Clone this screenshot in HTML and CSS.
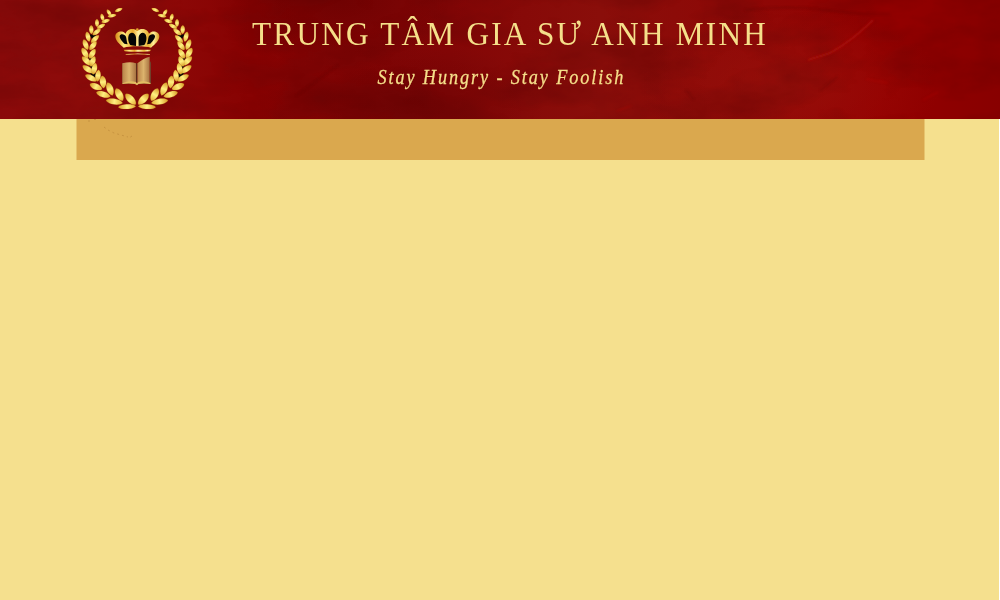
FILE: index.html
```html
<!DOCTYPE html>
<html lang="vi">
<head>
<meta charset="utf-8">
<title>Trung Tâm Gia Sư Anh Minh</title>
<link rel="stylesheet" href="styles.css">
</head>
<body>
<header class="banner">
  <svg class="texture" viewBox="0 0 1000 119" aria-hidden="true">
    <defs>
      <filter id="clouds" x="0" y="0" width="100%" height="100%" color-interpolation-filters="sRGB">
        <feTurbulence type="fractalNoise" baseFrequency="0.012 0.024" numOctaves="5" seed="8"/>
        <feColorMatrix values="0 0 0 0 0.34  0 0 0 0 0.01  0 0 0 0 0.01  1.3 0 0 0 -0.48"/>
      </filter>
      <filter id="soft"><feGaussianBlur stdDeviation="1"/></filter>
    </defs>
    <rect width="1000" height="119" filter="url(#clouds)" opacity=".6"/>
    <g fill="none" stroke="#bd1510" filter="url(#soft)">
      <path d="M873 20q-21 21-43 33l-22 7" stroke-width="2" opacity=".55"/>
      <path d="M617 111l14-5M866 79l22 4M923 100l15-8" opacity=".5"/>
      <path d="M745 10q45-5 80 0t65 4M820 91l18-15M686 90l8 10M338 65l-42 31" stroke="#520000" opacity=".45"/>
    </g>
  </svg>
  <div class="inner">
    <svg class="logo" viewBox="0 0 405 357" role="img" aria-label="Anh Minh">
      <defs>
        <linearGradient id="gold"><stop offset="0" stop-color="#d69a25"/><stop offset=".5" stop-color="#fff080"/><stop offset="1" stop-color="#e3b035"/></linearGradient>
        <linearGradient id="crownGold"><stop offset="0" stop-color="#d58b17"/><stop offset=".2" stop-color="#ffec80"/><stop offset=".4" stop-color="#e9a92c"/><stop offset=".52" stop-color="#fff1a0"/><stop offset=".75" stop-color="#e8b435"/><stop offset=".87" stop-color="#fff09a"/><stop offset="1" stop-color="#d69a21"/></linearGradient>
        <linearGradient id="page"><stop offset="0" stop-color="#b98348"/><stop offset=".5" stop-color="#dcb36d"/><stop offset="1" stop-color="#a87342"/></linearGradient>
        <path id="leaf" d="M-11 0C-8-9 7-9 11 0C7 9-8 9-11 0Z" fill="url(#gold)" stroke="#c58a22" stroke-width=".3"/>
        <g id="branch">
          <path d="M56 103l22 2-8 16zM54 172l24 1-8 22zM56 194l22 5-4 19zM58 217l21 4-5 18z" fill="#080603"/>
          <use href="#leaf" transform="translate(146 30) rotate(-22) scale(1.1 .65)"/>
          <use href="#leaf" transform="translate(117 38) rotate(58) scale(1 .75)"/>
          <use href="#leaf" transform="translate(126 47) rotate(-10) scale(1.2 .7)"/>
          <use href="#leaf" transform="translate(97 52) rotate(75) scale(1 .8)"/>
          <use href="#leaf" transform="translate(107 63) rotate(-18) scale(1.2 .75)"/>
          <use href="#leaf" transform="translate(81 69) rotate(88) scale(1.1 .85)"/>
          <use href="#leaf" transform="translate(93 79) rotate(-28) scale(1.25 .8)"/>
          <use href="#leaf" transform="translate(64 89) rotate(87) scale(1.2 .95)"/>
          <use href="#leaf" transform="translate(80 96) rotate(-37) scale(1.35 .9)"/>
          <use href="#leaf" transform="translate(54 110) rotate(76) scale(1.4 1)"/>
          <use href="#leaf" transform="translate(75 117) rotate(-43) scale(1.45 1)"/>
          <use href="#leaf" transform="translate(47 134) rotate(68) scale(1.5 1.1)"/>
          <use href="#leaf" transform="translate(69 137) rotate(-52) scale(1.5 1.1)"/>
          <use href="#leaf" transform="translate(45 159) rotate(60) scale(1.6 1.2)"/>
          <use href="#leaf" transform="translate(67 161) rotate(-59) scale(1.5 1.15)"/>
          <use href="#leaf" transform="translate(50 183) rotate(43) scale(1.7 1.2)"/>
          <use href="#leaf" transform="translate(68 184) rotate(-68) scale(1.5 1.2)"/>
          <use href="#leaf" transform="translate(54 208) rotate(34) scale(1.75 1.2)"/>
          <use href="#leaf" transform="translate(73 206) rotate(-77) scale(1.6 1.2)"/>
          <use href="#leaf" transform="translate(63 234) rotate(27) scale(1.75 1.2)"/>
          <use href="#leaf" transform="translate(84 227) rotate(-83) scale(1.6 1.2)"/>
          <use href="#leaf" transform="translate(78 260) rotate(22) scale(1.8 1.3)"/>
          <use href="#leaf" transform="translate(99 246) rotate(83) scale(1.7 1.4)"/>
          <use href="#leaf" transform="translate(100 283) rotate(17) scale(2 1.3)"/>
          <use href="#leaf" transform="translate(120 267) rotate(69) scale(1.9 1.45)"/>
          <use href="#leaf" transform="translate(133 305) rotate(9) scale(2.3 1.25)"/>
          <use href="#leaf" transform="translate(148 284) rotate(60) scale(1.9 1.5)"/>
          <use href="#leaf" transform="translate(171 320) rotate(-3) scale(2.4 1.05)"/>
          <use href="#leaf" transform="translate(182 298) rotate(46) scale(2 1.5)"/>
        </g>
      </defs>
      <use href="#branch"/>
      <use href="#branch" transform="translate(402 0) scale(-1 1)"/>
      <path d="M161 143C148 133 136 121 136 109c0-13 20-20 31-8 3-14 24-19 35-8 11-11 32-6 35 8 11-12 31-5 31 8 0 12-12 24-25 34-18-6-62-6-82 0Z" fill="url(#crownGold)"/>
      <path d="M163 131c-7-7-15-17-14-23 2-9 16-6 19 2 2 7 2 16 5 23zM181 135c-7-10-9-26-2-34 8-7 17 0 19 10 1 10 0 20 0 27zM223 135c7-10 9-26 2-34-8-7-17 0-19 10-1 10 0 20 0 27zM241 131c7-7 15-17 14-23-2-9-16-6-19 2-2 7-2 16-5 23z" fill="#050505"/>
      <circle cx="202" cy="89" r="4" fill="#e4a52c"/>
      <path d="M161 149h82l-3 5q-38 3-76 0zM167 162q35-3 73 0v2q-37-2-73 0z" fill="url(#crownGold)"/>
      <path d="M157 190l4-2v61h38l4 4 4-4h33v-66l3 5v63h-35l-5 4-6-4h-40z" fill="#70402a"/>
      <path d="M157 190q25-7 41 0v60q-20-5-41 0z" fill="url(#page)"/>
      <path d="M202 190q17-15 37-20v80q-20-6-37 0z" fill="url(#page)"/>
      <path d="M157 250q21-10 41-4l3 4 4-4q17-6 37 3l-1 3q-20-3-36 0l-4 4-6-4q-19-3-38 0z" fill="#e3bd62"/>
      <path d="M200 190v57" stroke="#56351c" stroke-width="3"/>
    </svg>
    <div class="heading">
      <h1 class="title">TRUNG TÂM GIA SƯ ANH MINH</h1>
      <p class="motto">Stay Hungry - Stay Foolish</p>
    </div>
  </div>
</header>
<nav class="menu">
  <svg class="specks" viewBox="0 0 80 25" aria-hidden="true">
    <path d="M11 2h3M17 .5h5M27 8l4 3 6 3 7 2 7 2M55 17l-3 2" fill="none" stroke="#b78335" stroke-width=".8" stroke-dasharray="2 3" opacity=".7"/>
  </svg>
</nav>
</body>
</html>
```
FILE: styles.css
```css
* { box-sizing: border-box; }
html { background: #fff; }
body {
  margin: 0;
  min-height: 600px;
  background: linear-gradient(#f5e08e, #f5e08e) 0 0 / 999px 100% no-repeat;
  overflow: hidden;
}
.banner {
  position: relative;
  height: 119px;
  overflow: hidden;
  background:
    radial-gradient(ellipse 130px 70px at 340px 0, rgba(90, 0, 0, .5), transparent),
    radial-gradient(ellipse 140px 65px at 405px 105px, rgba(75, 0, 0, .35), transparent),
    radial-gradient(ellipse 150px 80px at 790px 85px, rgba(155, 20, 13, .6), transparent),
    linear-gradient(90deg, #8a0a0a, #900c0a 12%, #870202 25%, #840606 45%, #8a0e0a 60%, #8e0806 75%, #940000 88%, #880000);
}
.texture {
  position: absolute;
  inset: 0;
  width: 1000px;
  height: 119px;
}
.inner {
  position: relative;
  display: flex;
  width: 860px;
  margin-left: 70px;
}
.logo { width: 135px; height: 119px; flex: none; }
.heading {
  width: 610px;
  color: #f5df8a;
  font-family: "Liberation Serif", "Times New Roman", serif;
  text-align: center;
}
.title {
  margin: 14px 0 0;
  font-size: 34px;
  line-height: 40px;
  font-weight: 400;
  letter-spacing: 2.4px;
  white-space: nowrap;
  transform: scaleX(.92);
}
.motto {
  margin: 11px 0 0;
  padding-right: 19px;
  font-size: 20px;
  line-height: 24px;
  font-style: italic;
  letter-spacing: 2.1px;
  white-space: nowrap;
  transform: scaleX(.91);
  -webkit-text-stroke: .3px #f5df8a;
}
.menu {
  width: 849px;
  height: 41px;
  margin-left: 76px;
  background: #daa84e;
  border: solid #e7c46e;
  border-width: 0 1px;
}
.specks { display: block; width: 80px; height: 25px; }
```
